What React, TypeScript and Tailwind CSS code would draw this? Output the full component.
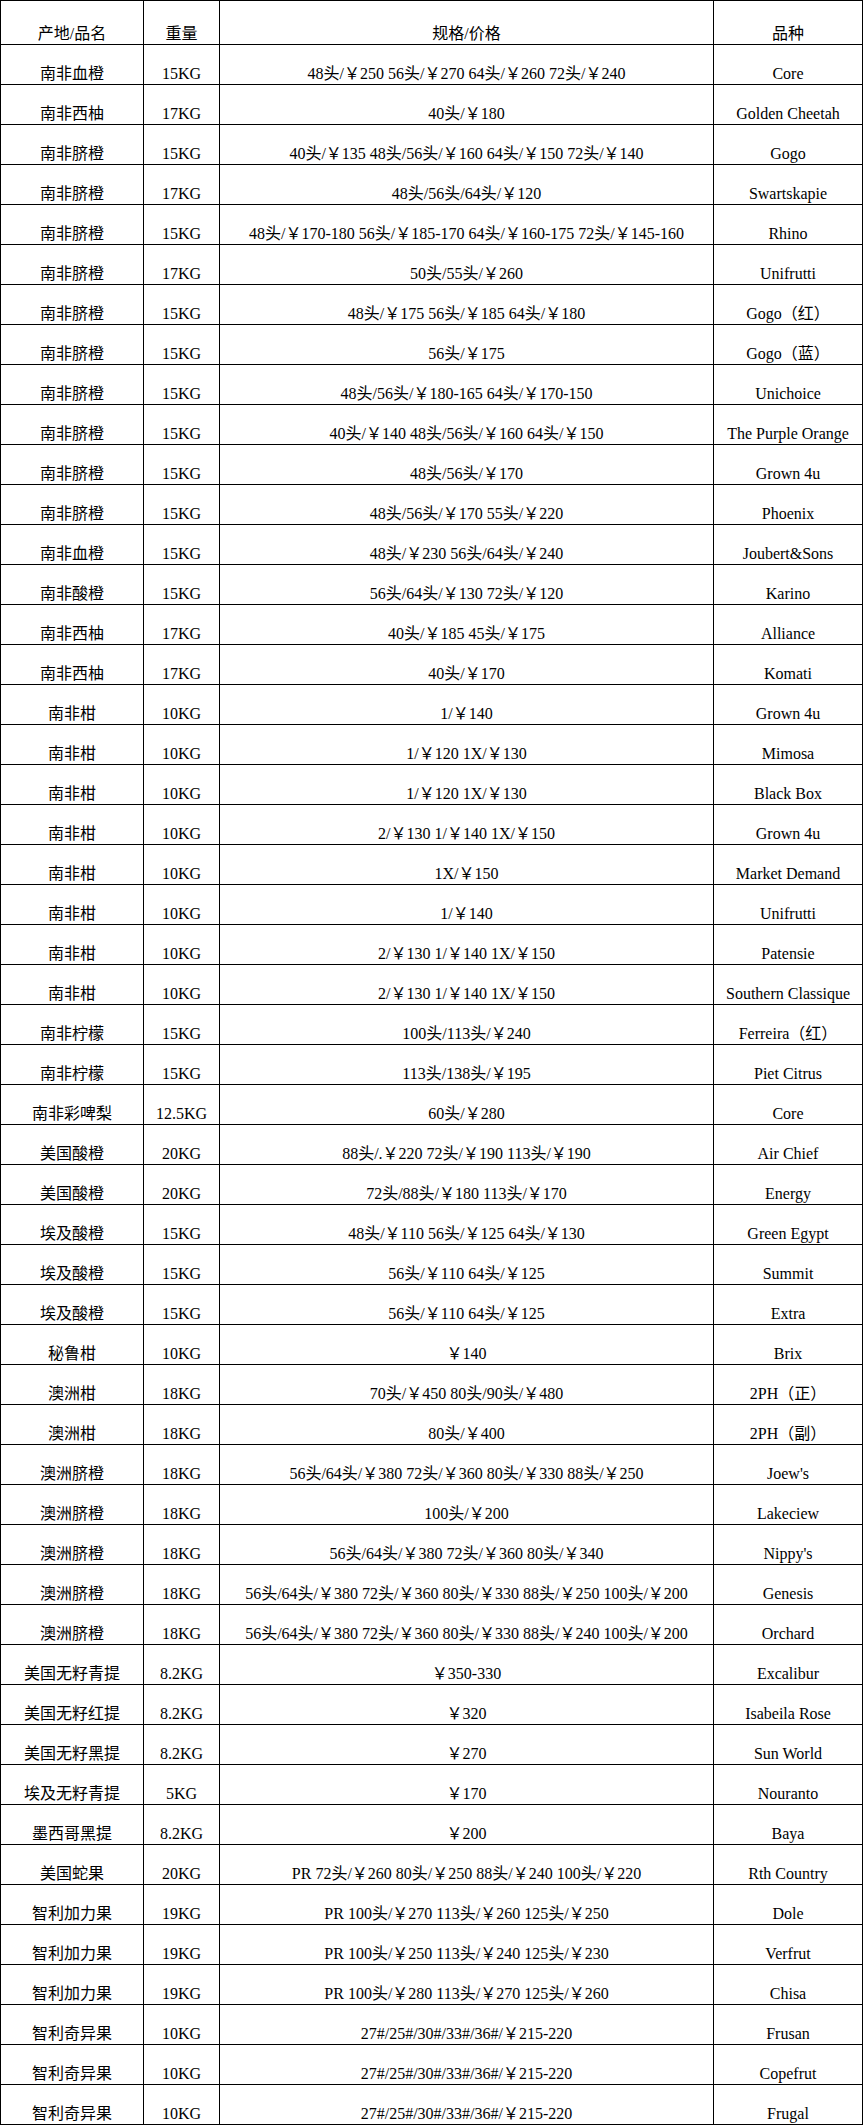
const rows: [string, string, string, string][] = [
  ['南非血橙', '15KG', '48头/￥250 56头/￥270 64头/￥260 72头/￥240', 'Core'],
  ['南非西柚', '17KG', '40头/￥180', 'Golden Cheetah'],
  ['南非脐橙', '15KG', '40头/￥135 48头/56头/￥160 64头/￥150 72头/￥140', 'Gogo'],
  ['南非脐橙', '17KG', '48头/56头/64头/￥120', 'Swartskapie'],
  ['南非脐橙', '15KG', '48头/￥170-180 56头/￥185-170 64头/￥160-175 72头/￥145-160', 'Rhino'],
  ['南非脐橙', '17KG', '50头/55头/￥260', 'Unifrutti'],
  ['南非脐橙', '15KG', '48头/￥175 56头/￥185 64头/￥180', 'Gogo（红）'],
  ['南非脐橙', '15KG', '56头/￥175', 'Gogo（蓝）'],
  ['南非脐橙', '15KG', '48头/56头/￥180-165 64头/￥170-150', 'Unichoice'],
  ['南非脐橙', '15KG', '40头/￥140 48头/56头/￥160 64头/￥150', 'The Purple Orange'],
  ['南非脐橙', '15KG', '48头/56头/￥170', 'Grown 4u'],
  ['南非脐橙', '15KG', '48头/56头/￥170 55头/￥220', 'Phoenix'],
  ['南非血橙', '15KG', '48头/￥230 56头/64头/￥240', 'Joubert&Sons'],
  ['南非酸橙', '15KG', '56头/64头/￥130 72头/￥120', 'Karino'],
  ['南非西柚', '17KG', '40头/￥185 45头/￥175', 'Alliance'],
  ['南非西柚', '17KG', '40头/￥170', 'Komati'],
  ['南非柑', '10KG', '1/￥140', 'Grown 4u'],
  ['南非柑', '10KG', '1/￥120 1X/￥130', 'Mimosa'],
  ['南非柑', '10KG', '1/￥120 1X/￥130', 'Black Box'],
  ['南非柑', '10KG', '2/￥130 1/￥140 1X/￥150', 'Grown 4u'],
  ['南非柑', '10KG', '1X/￥150', 'Market Demand'],
  ['南非柑', '10KG', '1/￥140', 'Unifrutti'],
  ['南非柑', '10KG', '2/￥130 1/￥140 1X/￥150', 'Patensie'],
  ['南非柑', '10KG', '2/￥130 1/￥140 1X/￥150', 'Southern Classique'],
  ['南非柠檬', '15KG', '100头/113头/￥240', 'Ferreira（红）'],
  ['南非柠檬', '15KG', '113头/138头/￥195', 'Piet Citrus'],
  ['南非彩啤梨', '12.5KG', '60头/￥280', 'Core'],
  ['美国酸橙', '20KG', '88头/.￥220 72头/￥190 113头/￥190', 'Air Chief'],
  ['美国酸橙', '20KG', '72头/88头/￥180 113头/￥170', 'Energy'],
  ['埃及酸橙', '15KG', '48头/￥110 56头/￥125 64头/￥130', 'Green Egypt'],
  ['埃及酸橙', '15KG', '56头/￥110 64头/￥125', 'Summit'],
  ['埃及酸橙', '15KG', '56头/￥110 64头/￥125', 'Extra'],
  ['秘鲁柑', '10KG', '￥140', 'Brix'],
  ['澳洲柑', '18KG', '70头/￥450 80头/90头/￥480', '2PH（正）'],
  ['澳洲柑', '18KG', '80头/￥400', '2PH（副）'],
  ['澳洲脐橙', '18KG', '56头/64头/￥380 72头/￥360 80头/￥330 88头/￥250', "Joew's"],
  ['澳洲脐橙', '18KG', '100头/￥200', 'Lakeciew'],
  ['澳洲脐橙', '18KG', '56头/64头/￥380 72头/￥360 80头/￥340', "Nippy's"],
  ['澳洲脐橙', '18KG', '56头/64头/￥380 72头/￥360 80头/￥330 88头/￥250 100头/￥200', 'Genesis'],
  ['澳洲脐橙', '18KG', '56头/64头/￥380 72头/￥360 80头/￥330 88头/￥240 100头/￥200', 'Orchard'],
  ['美国无籽青提', '8.2KG', '￥350-330', 'Excalibur'],
  ['美国无籽红提', '8.2KG', '￥320', 'Isabeila Rose'],
  ['美国无籽黑提', '8.2KG', '￥270', 'Sun World'],
  ['埃及无籽青提', '5KG', '￥170', 'Nouranto'],
  ['墨西哥黑提', '8.2KG', '￥200', 'Baya'],
  ['美国蛇果', '20KG', 'PR 72头/￥260 80头/￥250 88头/￥240 100头/￥220', 'Rth Country'],
  ['智利加力果', '19KG', 'PR 100头/￥270 113头/￥260 125头/￥250', 'Dole'],
  ['智利加力果', '19KG', 'PR 100头/￥250 113头/￥240 125头/￥230', 'Verfrut'],
  ['智利加力果', '19KG', 'PR 100头/￥280 113头/￥270 125头/￥260', 'Chisa'],
  ['智利奇异果', '10KG', '27#/25#/30#/33#/36#/￥215-220', 'Frusan'],
  ['智利奇异果', '10KG', '27#/25#/30#/33#/36#/￥215-220', 'Copefrut'],
  ['智利奇异果', '10KG', '27#/25#/30#/33#/36#/￥215-220', 'Frugal'],
];

const cell = 'border border-black p-0 pb-px text-center align-bottom leading-[18px] whitespace-nowrap';

export default function App() {
  return (
    <div className="bg-white text-black text-[16px] font-['Liberation_Serif','Noto_Sans_CJK_SC',serif]">
      <table className="table-fixed border-collapse w-[862px]">
        <colgroup>
          <col className="w-[143px]" />
          <col className="w-[76px]" />
          <col className="w-[494px]" />
          <col className="w-[149px]" />
        </colgroup>
        <thead>
          <tr className="h-[44px]">
            <th className={`${cell} font-normal`}>产地/品名</th>
            <th className={`${cell} font-normal`}>重量</th>
            <th className={`${cell} font-normal`}>规格/价格</th>
            <th className={`${cell} font-normal`}>品种</th>
          </tr>
        </thead>
        <tbody>
          {rows.map((r, i) => (
            <tr key={i} className="h-[40px]">
              <td className={cell}>{r[0]}</td>
              <td className={cell}>{r[1]}</td>
              <td className={cell}>{r[2]}</td>
              <td className={cell}>{r[3]}</td>
            </tr>
          ))}
        </tbody>
      </table>
    </div>
  );
}
